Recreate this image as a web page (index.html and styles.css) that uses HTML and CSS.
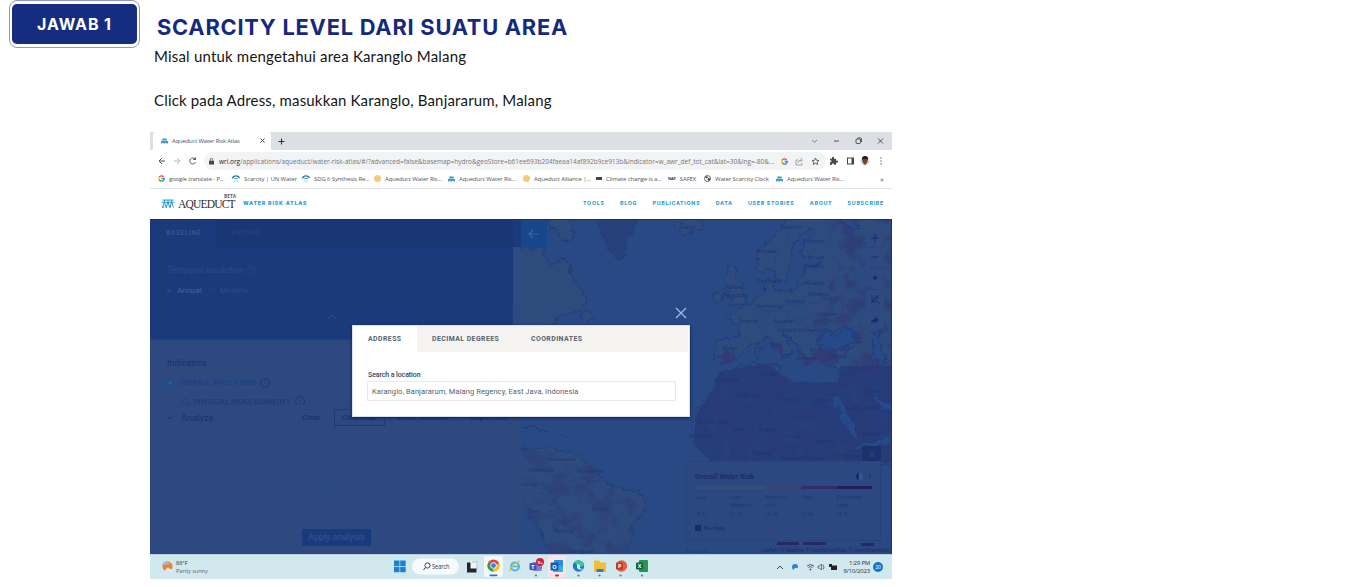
FILE: index.html
```html
<!DOCTYPE html>
<html lang="id">
<head>
<meta charset="utf-8">
<title>Scarcity level dari suatu area</title>
<link rel="stylesheet" href="styles.css">
</head>
<body>
<svg width="0" height="0" class="defs">
  <symbol id="aq" viewBox="0 0 14 10"><path d="M1 1.2H13M0 3.700H14M1 9.500l2-6 2 6M5 9.500l2-6 2 6M9 9.500l2-6 2 6M3 1v2.500M7 1v2.500M11 1v2.500" fill="none" stroke="currentColor" stroke-width="1.1"/><path d="M0 9h3M5 9h1M9 9h1" stroke="#4a5a68" stroke-width=".8"/></symbol>
  <symbol id="aqs" viewBox="0 0 7 6"><path d="M1.500.5h4l.5 2H1zM0 3h7v2.500H5.500L5 4.200l-.7 1.300H2.700L2 4.200l-.7 1.300H0z" fill="#3b9ac6"/></symbol>
  <symbol id="goog" viewBox="0 0 20 20"><g fill="none" stroke-width="4"><path d="M16 5A8 8 0 0 0 3.500 6" stroke="#ea4335"/><path d="M3.500 6a8 8 0 0 0 0 8" stroke="#fbbc05"/><path d="M3.500 14A8 8 0 0 0 15 16" stroke="#34a853"/><path d="M15 16a8 8 0 0 0 3-6H10" stroke="#4285f4"/></g></symbol>
  <symbol id="un" viewBox="0 0 8 7"><path d="M.5 3.500Q1 .7 4 .8 6.500.8 7.500 3" fill="none" stroke="#1c6fa8" stroke-width="1.300"/><path d="M2 3.500h4M3 5.500v1M5 5.500v1" stroke="#4aa3d0" stroke-width="1"/></symbol>
</svg>
<main class="slide">
  <div class="badge"><span>JAWAB 1</span></div>
  <div class="content">
    <h1>SCARCITY LEVEL DARI SUATU AREA</h1>
    <p class="p1">Misal untuk mengetahui area Karanglo Malang</p>
    <p class="p2">Click pada Adress, masukkan Karanglo, Banjararum, Malang</p>

    <section class="shot">
      <div class="tabs">
        <div class="tab"><svg width="7" height="6"><use href="#aqs"/></svg><span>Aqueduct Water Risk Atlas</span><svg class="tx" width="5" height="5" viewBox="0 0 5 5"><path d="M.5.5l4 4M4.500.5l-4 4" stroke="#333" stroke-width=".9"/></svg></div>
        <svg class="plus" width="7" height="7" viewBox="0 0 7 7"><path d="M3.500.5v6M.5 3.500h6" stroke="#333" stroke-width="1.100"/></svg>
        <svg class="win" width="74" height="8" viewBox="0 0 74 8" fill="none" stroke="#444" stroke-width=".9"><path d="M1 3l2.500 2.300L6 3" stroke="#777"/><path d="M23 4h5"/><rect x="45" y="2" width="4.500" height="4.500" rx="1"/><path d="M46.500 1h3q1 0 1 1v3"/><path d="M67 1.500l5 5M72 1.500l-5 5"/></svg>
      </div>
      <div class="toolbar">
        <svg width="42" height="10" viewBox="0 0 42 10" fill="none" stroke="#555" stroke-width="1"><path d="M8 5H2M5 2L2 5l3 3"/><path d="M17 5h6M20 2l3 3-3 3" stroke="#b5b7ba"/><path d="M38 3A3 3 0 1 0 38.500 6.200M38.500 1.500v2h-2.200"/></svg>
        <div class="omni">
          <svg width="5" height="7" viewBox="0 0 5 7"><rect y="2.800" width="5" height="3.700" fill="#444"/><path d="M1.200 3V1.800a1.300 1.300 0 0 1 2.600 0V3" fill="none" stroke="#444" stroke-width=".8"/></svg>
          <span class="url"><b>wri.org</b>/applications/aqueduct/water-risk-atlas/#/?advanced=false&amp;basemap=hydro&amp;geoStore=b61ee693b204faeaa14af892b9ce913b&amp;indicator=w_awr_def_tot_cat&amp;lat=30&amp;lng=-80&amp;...</span>
          <svg class="oi" width="40" height="9" viewBox="0 0 40 9"><use href="#goog" x="1" y="1" width="7" height="7"/><path d="M18 3h-2v5h6V6M18 6q0-3 4-3M20.500 1.300L22.500 3l-2 1.800" fill="none" stroke="#999" stroke-width=".9"/><path d="M35.500 1l1 2.300 2.500.2-1.900 1.600.6 2.400-2.200-1.300-2.200 1.300.6-2.400L32 3.500l2.500-.2z" fill="none" stroke="#555" stroke-width=".9"/></svg>
        </div>
        <svg class="ext" width="58" height="12" viewBox="0 0 58 12"><path d="M4 4h2q-.5-2 1-2t1 2h2v2q2-.5 2 1t-2 1v2H8q0-1.500-1-1.500T6 10H4V7.500q1.500 0 1.500-1T4 5.500z" fill="#484a4d" transform="translate(-1 -.3)"/><rect x="20.500" y="3" width="6" height="6" fill="none" stroke="#444"/><path d="M25.500 3v6" stroke="#444" stroke-width="2"/><circle cx="38" cy="6" r="4.700" fill="#cfe5df"/><path d="M35 4.500q0-3 3-3t3 3l-1 3.500-2 2-2-2z" fill="#7d3f2a"/><path d="M35 4q0-3 3-3t3 3z" fill="#2c1b18"/><g fill="#555"><circle cx="54" cy="3" r=".7"/><circle cx="54" cy="6" r=".7"/><circle cx="54" cy="9" r=".7"/></g></svg>
      </div>
      <div class="bookmarks">
        <span><svg width="7" height="7"><use href="#goog"/></svg><i>google translate - P...</i></span>
        <span><svg width="8" height="7"><use href="#un"/></svg><i>Scarcity | UN Water</i></span>
        <span><svg width="8" height="7"><use href="#un"/></svg><i>SDG 6 Synthesis Re...</i></span>
        <span><em class="sun"></em><i>Aqueduct Water Ris...</i></span>
        <span><svg width="7" height="6"><use href="#aqs"/></svg><i>Aqueduct Water Ris...</i></span>
        <span><em class="sun"></em><i>Aqueduct Alliance |...</i></span>
        <span><em class="dash"></em><i>Climate change is a...</i></span>
        <span><em class="naf">NAF</em><i>SAFEX</i></span>
        <span><svg width="7" height="7" viewBox="0 0 7 7"><circle cx="3.500" cy="3.500" r="3" fill="#fff" stroke="#444" stroke-width=".8"/><path d="M1 2l2-1 1 1.500-1.500 1zM4 3l2.500.5L5 6 3.500 5z" fill="#444"/></svg><i>Water Scarcity Clock</i></span>
        <span><svg width="7" height="6"><use href="#aqs"/></svg><i>Aqueduct Water Ris...</i></span>
        <span class="more">»</span>
      </div>
      <header class="site">
        <svg class="logo" width="14" height="9" preserveAspectRatio="none"><use href="#aq"/></svg>
        <div class="brand"><sup>BETA</sup><span>AQUEDUCT</span></div>
        <span class="atlas">WATER RISK ATLAS</span>
        <nav><a>TOOLS</a><a>BLOG</a><a>PUBLICATIONS</a><a>DATA</a><a>USER STORIES</a><a>ABOUT</a><a>SUBSCRIBE</a></nav>
      </header>

      <div class="app">
        <aside class="panel">
          <div class="top">
            <div class="ptabs"><span>BASELINE</span><span>FUTURE</span></div>
            <div class="temporal">Temporal resolution <b class="q">?</b></div>
            <div class="radios"><em class="on"></em><span>Annual</span><em class="off"></em><span class="m">Monthly</span></div>
            <svg class="chev" width="10" height="6" viewBox="0 0 10 6"><path d="M1 5l4-4 4 4" fill="none" stroke="#2b4c88" stroke-width="1.200"/></svg>
          </div>
          <div class="ind">
            <h3>Indicators</h3>
            <div class="overall"><em></em>OVERALL WATER RISK<b class="q">?</b></div>
            <div class="phys"><em></em>PHYSICAL RISKS QUANTITY<b class="q">?</b></div>
          </div>
          <div class="analyze">
            <div class="arow"><svg width="8" height="5" viewBox="0 0 8 5"><path d="M1 .5l3 3.500L7 .5" fill="none" stroke="#16336e"/></svg><span class="at">Analyze</span><span class="btn">Clear</span><span class="btn sel">Click map</span><span class="btn">Enter Address</span><span class="btn">Import file</span></div>
            <svg class="spin" width="10" height="14" viewBox="0 0 10 14"><path d="M1 1q0 8 7 11" fill="none" stroke="#154f98" stroke-width="1.300"/></svg>
            <div class="apply">Apply analysis</div>
          </div>
        </aside>
        <div class="rail"></div>
        <div class="map">
          <svg width="371" height="334" viewBox="0 0 371 334">
            <defs>
              <filter id="coast" x="-5%" y="-5%" width="110%" height="110%"><feTurbulence type="fractalNoise" baseFrequency=".12" numOctaves="3" seed="4"/><feDisplacementMap in="SourceGraphic" scale="9" xChannelSelector="R" yChannelSelector="G"/><feGaussianBlur stdDeviation=".35"/></filter>
              <filter id="mottle" x="0" y="0" width="100%" height="100%" color-interpolation-filters="sRGB"><feTurbulence type="fractalNoise" baseFrequency=".065" numOctaves="4" seed="11"/><feColorMatrix values="0 0 0 0 .19  0 0 0 0 .21  0 0 0 0 .45  5 0 0 0 -2.300"/></filter>
              <filter id="green" x="0" y="0" width="100%" height="100%" color-interpolation-filters="sRGB"><feTurbulence type="fractalNoise" baseFrequency=".08" numOctaves="3" seed="23"/><feColorMatrix values="0 0 0 0 .18  0 0 0 0 .29  0 0 0 0 .47  5 0 0 0 -2.700"/></filter>
              <clipPath id="east"><path d="M310 0H371V150H322L318 128 290 112 305 70 318 50 306 25z"/></clipPath>
              <clipPath id="africa"><path d="M198 152L206 150 249 143 259 154 276 163 317 162 320 146 371 146V243H192L174 226V196L192 169z"/></clipPath>
              <clipPath id="amer"><path d="M1 228H29L52 231 76 251 86 264 122 274 124 288 112 304 109 324 99 334H28L22 314 1 288z"/></clipPath>
            </defs>
            <rect width="371" height="334" fill="#284983"/>
            <g filter="url(#coast)" fill="#2e4b7e" stroke="#1e3c7a" stroke-width="1">
              <path d="M-6 28H20L30 46 38 40 44 39 52 56 66 80 60 90 40 96 24 108-6 112zM26-4L38 18 50 22 54 12 44-4zM58 96L66 90 73 100 62 103z"/>
              <path d="M76-4L84 20 92 35 101 40 106 20 118-4z" fill="#254079"/>
              <path d="M154 6L162 15 181 9 181 0 165-1z"/>
              <path d="M270-4L256 14 238 30 235 47 242 53 250 48 256 60 264 60 270 42 268 30 280 15 290 8 296 10 284 22 279 33 289 38 304 36 298 45 284 47 279 60 276 69 252 73 253 61 245 58 243 75 230 82 219 89 205 96 218 106 217 118 196 119 194 140 206 146 215 140 224 128 237 122 246 118 253 120 262 130 268 138 258 138 272 132 266 120 259 110 274 122 282 142 292 140 290 130 300 130 298 118 304 109 314 112 326 106 338 120 330 128 302 132 298 142 317 146 321 162 300 165 276 163 270 170 259 155 258 145 235 143 206 151 192 169 172 196 174 226 192 243 300 250 380 244V-4z"/>
              <path d="M207 48L201 60 210 66 206 75 213 80 208 85 226 83 221 70 215 58 217 50zM192 74L194 83 202 80 203 69z"/>
              <path d="M1 228L29 228 52 231 76 251 86 264 122 274 124 288 112 304 109 324 99 338H28L22 314 1 290-5 280V230z"/>
              <path d="M0 206L12 207 28 212M38 214L48 217"/><path d="M235 126l4 0 0 12-5 0z"/>
            </g>
            <g clip-path="url(#africa)"><rect x="160" y="135" width="211" height="110" fill="#283d7a" filter="url(#coast)"/><rect x="160" y="135" width="211" height="110" filter="url(#mottle)" opacity=".3"/><rect x="160" y="135" width="211" height="110" filter="url(#green)" opacity=".3"/></g>
            <g clip-path="url(#east)"><rect x="285" width="86" height="152" filter="url(#mottle)" opacity=".6"/></g>
            <g clip-path="url(#amer)"><rect y="225" width="128" height="109" filter="url(#mottle)" opacity=".35"/></g>
            <path d="M197 137L206 130 216 137 206 145zM244 120L262 128 266 136 256 130zM275 125L287 138 296 131 314 130 318 144 302 142 285 143z" fill="#303b78" filter="url(#coast)"/>
            <g fill="#28498a" stroke="#1f3b78" filter="url(#coast)"><path d="M297 123L305 112 316 116 326 107 334 122 316 128 304 127z"/><path d="M351 113L357 111 360 127 366 139 361 145 354 139z"/><path d="M312 176L318 178 330 200 339 217 333 218 321 200z"/><path d="M350 172L360 180 374 186V193L360 189zM371 215L352 222 336 224 334 229 371 223z"/><path d="M318-2L332 10 338 6 326-4z"/></g>
            <g fill="none" stroke="#213f7a" stroke-width=".6" filter="url(#coast)"><path d="M252 56L258 30 272 8M285 60L298 62 302 80 285 84 262 84 255 92 240 90M302 80L316 78 330 92M232 88L242 100 236 112M262 84L266 98 282 104 292 112M256 106L276 98 294 100M209 120L212 140M228 150L226 166 200 190M252 146L258 180 240 205M258 180L290 186 290 165M290 186V225M290 200L320 200M228 205L240 205 270 205M174 210L210 212M3 248L26 250 40 262 26 275 10 272M40 262L60 258 80 262M10 285L35 282 46 306 72 312 60 332M46 306L28 316"/></g>
            <g class="lbl"><text x="158" y="9">Island</text><text x="259" y="9">Sweden</text><text x="282" y="23">Finland</text><text x="235" y="33">Norway</text><text x="283" y="48">Estonia</text><text x="235" y="63">Denmark</text><text x="278" y="65">Lithuania</text><text x="205" y="69">United</text><text x="202" y="77">Kingdom</text><text x="235" y="88">Germany</text><text x="264" y="83">Poland</text><text x="287" y="76">Belarus</text><text x="295" y="96">Ukraine</text><text x="218" y="103">France</text><text x="252" y="103">Austria</text><text x="277" y="112">Romania</text><text x="256" y="112">Croatia</text><text x="201" y="130">Spain</text><text x="249" y="126">Italy</text><text x="275" y="140">Greece</text><text x="307" y="138">Turkey</text><text x="193" y="162">Morocco</text><text x="237" y="156">Tunisia</text><text x="217" y="177">Algeria</text><text x="262" y="181">Libya</text><text x="294" y="182">Egypt</text><text x="324" y="190">Saudi Arabia</text><text x="343" y="173">Kuwait</text><text x="177" y="204">Mauritania</text><text x="211" y="211">Mali</text><text x="238" y="211">Niger</text><text x="264" y="218">Chad</text><text x="295" y="223">Sudan</text><text x="168" y="218">Senegal</text><text x="341" y="216">Yemen</text><text x="232" y="235">Nigeria</text><text x="260" y="240">Central African</text><text x="318" y="238">Ethiopia</text><text x="26" y="241">Venezuela</text><text x="7" y="252">Colombia</text><text x="56" y="253">Suriname</text><text x="0" y="266">uador</text><text x="7" y="293">Peru</text><text x="71" y="291">Brazil</text><text x="34" y="313">Bolivia</text><text x="47" y="333">Paraguay</text></g>
            <path d="M256 322h22v3h-22zM282 322h23v3h-23zM340 323h13v3h-13z" fill="#262a62"/>
            <text x="164" y="333" class="south">South</text>
          </svg>
          <div class="back"><svg width="12" height="10" viewBox="0 0 12 10"><path d="M11 5H1M5 1L1 5l4 4" fill="none" stroke="#3568a4" stroke-width="1.200"/></svg></div>
          <div class="ctrl"><span><svg viewBox="0 0 18 18"><path d="M9 5v8M5 9h8"/></svg></span><span><svg viewBox="0 0 18 18"><path d="M5 9h8"/></svg></span><span><svg viewBox="0 0 18 18"><path d="M9 7l2 1.700-2 2-2-2z" fill="#142e68"/></svg></span><span><svg viewBox="0 0 18 18"><path d="M4 5l10 9M5 13l3-3M5 10h3v3M13 5l-3 3M13 8h-3V5"/></svg></span><span><svg viewBox="0 0 18 18"><path d="M5 13q0-5 4-5V5.500L13 9l-4 3.500V10.500q-3 0-4 2.500z" fill="#142e68" stroke="none"/></svg></span></div>
          <div class="down"><svg width="8" height="8" viewBox="0 0 8 8"><path d="M4 1v6M1.500 4.500L4 7l2.500-2.500" fill="none" stroke="#304a80"/></svg></div>
          <div class="legend">
            <div class="lt"><b>Overall Water Risk</b><em></em><i>i</i></div>
            <div class="bar"><u></u><u></u><u></u><u></u><u></u></div>
            <div class="ll"><span>Low</span><span>Low -<br>Medium</span><span>Medium-<br>high</span><span>High</span><span>Extremely<br>high</span></div>
            <div class="ll r"><span>(0-1)</span><span>(1-2)</span><span>(2-3)</span><span>(3-4)</span><span>(4-5)</span></div>
            <div class="nd"><em></em>No data</div>
          </div>
          <div class="attr">Leaflet | © Mapbox © OpenStreetMap, © OpenStreetMap</div>
        </div>
        <svg class="close" width="12" height="12" viewBox="0 0 12 12"><path d="M1 1l10 10M11 1L1 11" stroke="#9fb6ec" stroke-width="1.300"/></svg>
        <div class="modal">
          <div class="mtabs"><span class="a">ADDRESS</span><span class="d">DECIMAL DEGREES</span><span class="c">COORDINATES</span></div>
          <label>Search a location</label>
          <div class="field">Karanglo, Banjararum, Malang Regency, East Java, Indonesia</div>
        </div>
      </div>

      <footer class="task">
        <div class="weather"><svg width="12" height="13" viewBox="0 0 12 13"><circle cx="6.500" cy="6.500" r="5" fill="#ee8427"/><path d="M1 5Q2 1 6 1.500L9 4Q4 5 1 5z" fill="#9db8e8"/><path d="M5 9q2-3 4 0 3 0 2 3H6q-3-1-1-3z" fill="#dce7f7"/></svg><div><b>88°F</b><span>Partly sunny</span></div></div>
        <svg class="icons" width="260" height="25" viewBox="0 0 260 25">
          <g fill="#1683d8"><path d="M1 6.500h5.500V12H1zM7.200 6.500h5.500V12H7.200zM1 12.700h5.500v5.500H1zM7.200 12.700h5.500v5.500H7.200z"/></g>
          <rect x="19" y="4.500" width="47" height="16" rx="8" fill="#f5fbfd"/><circle cx="34.500" cy="11.500" r="2.600" fill="none" stroke="#333" stroke-width=".9"/><path d="M32.500 13.500l-2 2.500" stroke="#333"/><text x="39" y="15" class="st" textLength="17.500" lengthAdjust="spacingAndGlyphs">Search</text>
          <path d="M77 7h8v8h-8z" fill="#f0f3f4"/><path d="M79 7h6v8h-2V9h-4z" fill="#d0d7da"/><path d="M74 8.500h3.500v6h6v4H74z" fill="#20262b"/>
          <rect x="91" y="2" width="19" height="21" rx="2" fill="#eff8fa"/><circle cx="100.500" cy="11.500" r="6" fill="#e6442f"/><path d="M100.500 11.500L95 9A6 6 0 0 0 100 17.500z" fill="#2da14d"/><path d="M100.500 11.500l5.700-2a6 6 0 0 1-6.200 8z" fill="#f8c51c"/><circle cx="100.500" cy="11.500" r="2.900" fill="#3b82e8" stroke="#fff" stroke-width=".9"/><rect x="96.500" y="20.500" width="8" height="1.800" rx=".9" fill="#1976d2"/>
          <circle cx="122" cy="12.500" r="4" fill="none" stroke="#4eb7e5" stroke-width="2"/><path d="M119 12.500h6" stroke="#4eb7e5" stroke-width="1.500"/><path d="M117 17.500q-1-3 4-7t6-3" fill="none" stroke="#e7bd38" stroke-width="1.300"/>
          <rect x="139" y="8" width="10" height="9" rx="2" fill="#7c80d8"/><rect x="136.500" y="9" width="7" height="7" rx="1" fill="#4b50b5"/><text x="138.300" y="14.500" class="w">T</text><circle cx="147" cy="8" r="4" fill="#cf1f3a"/><text x="144.800" y="9.700" class="w s">9+</text><circle cx="143" cy="21.500" r="1.100" fill="#6b787d"/>
          <rect x="155" y="2" width="18" height="21" rx="2" fill="#fde3e3"/><rect x="161" y="6" width="9" height="12" rx="1" fill="#2590e3"/><path d="M160 12l10 0v6h-10z" fill="#35aeea"/><rect x="157.500" y="8.500" width="8" height="8" rx="1" fill="#0f5fb5"/><text x="159.300" y="14.500" class="w">O</text><rect x="162" y="20.500" width="4" height="2" rx="1" fill="#d02626"/>
          <circle cx="185.500" cy="12" r="5.700" fill="#1b78c8"/><path d="M181 8q5-4 9.500 1 1.500 4-5 4z" fill="#41c49b"/><path d="M184 11q2-2 3 1-1 3 3 3-4 2-6-1z" fill="#d9f0f4"/><circle cx="185.500" cy="21.500" r="1.100" fill="#6b787d"/>
          <path d="M201 6.500h5l1.500 2h5.500v9.500h-12z" fill="#f1bf38"/><path d="M203.500 15h7v3h-7z" fill="#2d7ed0"/><circle cx="206.500" cy="21.500" r="1.100" fill="#6b787d"/>
          <circle cx="228.500" cy="12" r="5.700" fill="#df6142"/><rect x="223" y="8.500" width="7" height="7" rx="1" fill="#bd3c22"/><text x="225" y="14.300" class="w">P</text><circle cx="227.500" cy="21.500" r="1.100" fill="#6b787d"/>
          <rect x="246" y="6" width="9" height="12" rx="1" fill="#27945b"/><rect x="243" y="8.500" width="7" height="7" rx="1" fill="#126337"/><text x="244.800" y="14.300" class="w">X</text><circle cx="249" cy="21.500" r="1.100" fill="#6b787d"/>
        </svg>
        <svg class="tray" width="62" height="12" viewBox="0 0 62 12"><path d="M1 8l3-3 3 3" fill="none" stroke="#444"/><circle cx="19" cy="6" r="3" fill="#2b82d2"/><path d="M18 8q3-3 5 1h-5z" fill="#d9e6ee"/><path d="M31 5q3.500-3 7 0M32.500 6.500q2-2 4 0" fill="none" stroke="#555"/><circle cx="34.500" cy="8.500" r=".9" fill="#555"/><path d="M42 5h1.500l2-2v6l-2-2H42zM47 3.500q2 2.500 0 5" fill="none" stroke="#555" stroke-width=".8"/><rect x="55" y="4.500" width="6" height="4.500" fill="#222"/><path d="M53 3h3v3h-3z" fill="#222"/></svg>
        <div class="clock"><span>1:29 PM</span><span>8/10/2023</span></div>
        <div class="n20">20</div>
      </footer>
    </section>
  </div>
</main>
</body>
</html>
```
FILE: styles.css
```css
*{box-sizing:border-box}
body{margin:0;background:#fff;width:1348px;height:587px;overflow:hidden;font-family:"Open Sans","Noto Sans",sans-serif}
.defs{position:absolute}
svg{display:block;flex:none}
i,em{font-style:normal}
.slide{display:flex;align-items:flex-start}
.badge{margin:0 0 0 9px;width:131px;height:48px;border:1px solid #8c96c6;border-radius:8px;padding:3px 2px;flex:none}
.badge span{display:flex;align-items:center;justify-content:center;height:40px;background:#142d80;border-radius:5px;color:#fff;font:700 16px Inter,sans-serif;letter-spacing:.9px}
.content{margin-left:10px;width:742px}
h1{margin:14px 0 0 7px;font:700 21.800px/27px Inter,sans-serif;color:#142a7c;letter-spacing:.78px;white-space:nowrap}
.content p{margin:0 0 0 4px;font:15px/20px Lato,sans-serif;color:#151515;white-space:nowrap;letter-spacing:.19px}
.content .p1{margin-top:5px}
.content .p2{margin-top:24px;letter-spacing:.16px}
.shot{margin-top:22px;width:742px;height:447px;background:#fff;font-size:6px;color:#555;white-space:nowrap}
.tabs{height:18px;background:#dcdfe4;display:flex;align-items:center;padding-left:3px}
.tab{background:#fff;width:118px;height:18px;border-radius:3px 3px 0 0;display:flex;align-items:center;padding:0 0 1px 8px}
.tab span{margin-left:4px;width:88px;font-size:6px;letter-spacing:-.22px}
.plus{margin-left:7px}
.win{margin-left:auto;margin-right:7px}
.toolbar{height:22px;display:flex;align-items:center;padding-left:7px}
.omni{margin-left:5px;width:622px;height:18px;border-radius:9px;background:#f1f3f5;display:flex;align-items:center;padding-left:5px}
.url{width:561px;margin:0 0 0 5px;font-size:6.500px;color:#777;letter-spacing:0}
.url b{font-weight:400;color:#222}
.ext{margin-left:1px}
.bookmarks{height:17px;border-bottom:1px solid #e2e4e7;display:grid;grid-template-columns:74px 70px 72px 74px 75px 73px 72px 36px 72px 104px 10px;padding:0 0 3px 8px}
.bookmarks span{display:flex;align-items:center;gap:4px;font-size:6px;letter-spacing:-.13px;color:#555}
.bookmarks .more{font-size:8px}
.sun{width:7px;height:7px;border-radius:50%;background:#f8c780}
.dash{width:6px;height:3px;background:#444}
.naf{font-size:4px;color:#27385e;font-weight:700}
.site{height:30px;display:flex;align-items:flex-start;color:#189ad6}
.logo{margin:10px 0 0 11px}
.brand{width:59px;margin:4px 0 0 3px;position:relative}
.brand span{display:block;font:11.500px/16px "Liberation Serif",serif;color:#2a2e36;padding-top:3px;letter-spacing:-.8px}
.brand sup{position:absolute;right:1px;top:1px;font:700 4.800px/5px "Open Sans",sans-serif;color:#555c68}
.atlas{margin:10px 0 0 6px;font:800 5.300px/9px Inter,sans-serif;letter-spacing:.8px}
nav{margin-left:auto;padding:10px 8px 0 0;display:flex;gap:15.300px}
nav a{font:700 5.300px/9px Inter,sans-serif;letter-spacing:.72px}
.app{height:335px;position:relative;display:flex;background:#2d4980;border-top:1px solid #16336d;overflow:hidden;border-right:1px solid #17346f}
.panel{width:363px;flex:none;display:flex;flex-direction:column;font-family:Roboto,sans-serif}
.top{height:120px;background:#1b3a7c;border-bottom:1px solid #213f7e;flex:none}
.ptabs{height:27px;display:grid;grid-template-columns:66px 1fr;line-height:27px;font-size:7px;font-weight:500;letter-spacing:.4px;color:#3a568e}
.ptabs span{padding-left:16px}
.ptabs span+span{background:#193775;color:#254583}
.temporal{margin:17px 0 0 17px;font-size:8.700px;line-height:12px;color:#2c4b86}
.q{display:inline-flex;width:9px;height:9px;border:1px solid currentColor;border-radius:50%;font-size:6px;align-items:center;justify-content:center;font-weight:400;margin-left:4px}
.temporal .q{margin-left:1px;color:#264683;vertical-align:1px}
.radios{display:flex;align-items:center;margin:9px 0 0 17px;font-size:8px;line-height:11px;color:#466198}
.radios em{width:4px;height:4px;border-radius:50%;background:#1a4c8e;margin-right:6px}
.radios .off{width:7px;height:7px;background:none;border:1px solid #234380;margin:0 4px 0 7px}
.m{color:#2c4c87}
.chev{margin:18px 0 0 177px}
.ind{height:64px;padding:17px 0 0 17px;color:#1a3971;font-size:7.500px;overflow:hidden;flex:none}
.ind h3{margin:0;font:500 8.800px/13px Roboto,sans-serif;color:#1b376f}
.overall{display:flex;align-items:center;margin-top:7px;letter-spacing:.03px;font-size:7.700px;color:#163f86;line-height:11px}
.overall em{width:4px;height:4px;border-radius:50%;background:#1560ab;margin:0 6px 0 1px;outline:1px solid #1b4c90;outline-offset:1px}
.ind .q{color:#1a3971;width:10px;height:10px;flex:none}
.phys{display:flex;align-items:center;margin:8px 0 0 2px;font-size:7.800px;letter-spacing:0;border-left:1px solid #1c5596;padding-left:12px;line-height:9px}
.phys em{width:7px;height:7px;border:1px solid #1e4383;border-radius:50%;margin-right:4px}
.analyze{height:149px;border-top:1px solid #28457c}
.arow{display:flex;align-items:center;height:24px;padding-left:16px;font-size:8px;font-weight:500;color:#17346e}
.at{margin-left:7px;width:112px;font-size:9.300px;font-weight:400;flex:none}
.btn{height:17px;line-height:15px;border:1px solid #294680;padding:0 8px;margin-right:4px;flex:none}
.btn.sel{border-color:#1e3a76;padding:0 7px}
.spin{margin:50px 0 0 176px}
.apply{margin:36px 0 0 152px;width:69px;height:17px;background:#1a3a7e;color:#35558f;font-size:8.700px;line-height:17px;text-align:center;letter-spacing:.1px}
.rail{width:8px;flex:none;background:linear-gradient(#1b3a7c 27px,#304b83 27px 84px,#2d4980 84px)}
.map{width:371px;flex:none;position:relative;overflow:hidden;color:#172f67;font-family:Roboto,sans-serif}
.lbl{font:5.900px "Open Sans",sans-serif;fill:#1b3470}
.south{font:6.500px "Liberation Serif",serif;letter-spacing:2px;fill:#1b3470}
.back{position:absolute;left:0;top:0;width:26px;height:27px;background:#17478a;display:flex;align-items:center;justify-content:center}
.ctrl{position:absolute;left:345px;top:9px;width:18px;display:flex;flex-direction:column}
.ctrl span{height:18px;background:#2f4982;margin-bottom:3px}
.ctrl span:first-child{margin-bottom:1px}
.ctrl svg{width:18px;height:18px;fill:none;stroke:#142e68;stroke-width:1}
.down{position:absolute;left:341px;top:226px;width:19px;height:16px;background:#1b326b;display:flex;align-items:center;justify-content:center}
.legend{position:absolute;left:165px;top:241px;width:195px;height:80px;background:#2c4880;border:1px solid #284377;padding:9px 8px 0;font-size:5.800px}
.lt{display:flex;align-items:center;height:10px;font-size:7.200px}
.lt b{flex:1;font-weight:700}
.lt em{width:7px;height:7px;border-radius:50%;background:linear-gradient(90deg,#142e68 50%,#315795 50%);margin-right:6px}
.lt i{font:italic 700 7px "Liberation Serif",serif;margin-right:1px}
.bar{display:grid;grid-template-columns:repeat(5,1fr);height:3px;margin-top:5px}
.bar u:nth-child(1){background:#344f7b}.bar u:nth-child(2){background:#355078}.bar u:nth-child(3){background:#3a4473}.bar u:nth-child(4){background:#352c69}.bar u:nth-child(5){background:#241f5a}
.ll{display:grid;grid-template-columns:repeat(5,1fr);line-height:8px;margin-top:4px;color:#1d3871}
.ll.r{margin-top:1px}
.nd{display:flex;align-items:center;gap:3px;margin-top:7px}
.nd em{width:6px;height:6px;background:#182d60}
.attr{position:absolute;right:2px;bottom:0;background:#2b4780;font-size:5.100px;line-height:8px;padding:0 1px}
.close{position:absolute;left:524.500px;top:87px}
.modal{position:absolute;left:202px;top:105px;width:338px;height:92px;background:#fff;box-shadow:0 1px 3px #0c1f4a;font-family:Roboto,sans-serif;color:#56626e;border:1px solid #d8dfef}
.mtabs{display:flex;height:26px;background:#f4f3ef;font-size:6.900px;font-weight:700;line-height:26px;letter-spacing:.45px;margin-right:1px}
.mtabs span{padding-left:15px}
.mtabs .a{width:64px;background:#fff}
.mtabs .d{width:98px}
.mtabs .c{padding-left:16px}
.modal label{display:block;margin:18px 0 0 15px;font-size:7px;font-weight:500;line-height:10px;color:#35445a;letter-spacing:-.1px}
.field{margin:1px 0 0 14px;width:309px;height:20px;border:1px solid #e8e8ea;font-size:7.500px;line-height:19px;padding-left:4px;color:#56616e;letter-spacing:.09px}
.task{height:25px;background:#d0e8ee;border-top:1px solid #b9cfe0;display:flex;align-items:center;color:#333;padding-bottom:1px}
.weather{display:flex;align-items:center;margin-left:11px;width:232px;gap:3px}
.weather b,.weather span{display:block;font-size:5.700px;line-height:8px;font-weight:400}
.weather b{font-size:5.500px}
.weather span{color:#667;letter-spacing:-.08px}
.st{font:6.500px "Open Sans",sans-serif;fill:#333}
.w{font:700 5.500px "Open Sans",sans-serif;fill:#fff}
.w.s{font-size:4.200px}
.tray{margin-left:123px}
.clock{width:27px;margin-left:5px;margin-right:3px;display:flex;flex-direction:column;align-items:flex-end;font-size:6px;line-height:8px;letter-spacing:-.2px}
.n20{width:10px;height:10px;border-radius:50%;background:#1475c8;color:#fff;font-size:5px;line-height:10px;text-align:center}
```
